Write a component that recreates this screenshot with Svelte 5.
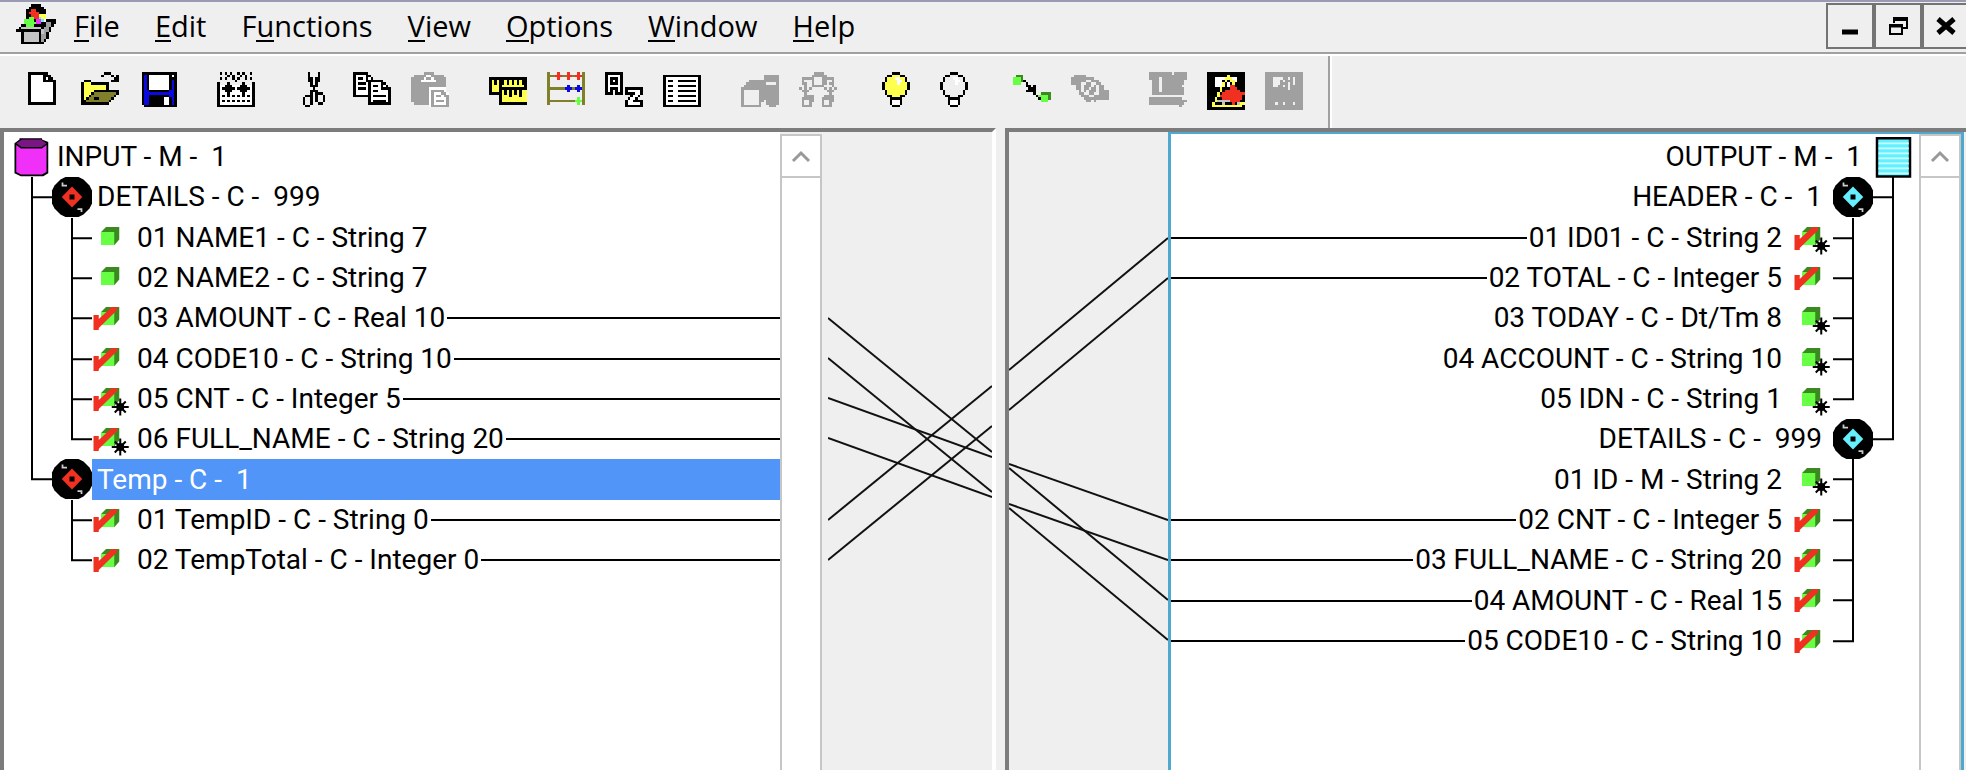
<script>
  const colors = {
    K: '#000000', W: '#ffffff', G: '#a0a0a0', Y: '#ffff4d', O: '#80802a', B: '#0a0ae0',
    R: '#f03020', E: '#66ff44', D: '#3a8a20', L: '#c4c4c4', M: '#f030f8', C: '#66f0ff', A: '#efefef'
  };

  function pixels(rows) {
    const out = [];
    rows.forEach((row, y) => {
      let x = 0;
      while (x < row.length) {
        const c = row[x];
        let end = x + 1;
        while (end < row.length && row[end] === c) end++;
        if (colors[c]) out.push({ x, y, w: end - x, fill: colors[c] });
        x = end;
      }
    });
    return out;
  }

  const bulb = (c) => [
    '......KKK', `....KK${c}${c}${c}KK`, `...K${c}${c}${c}WW${c}${c}K`, `...K${c}${c}${c}${c}WW${c}K`,
    `..K${c}${c}${c}${c}${c}W${c}${c}${c}K`, `..K${c.repeat(9)}K`, `..K${c.repeat(9)}K`,
    `...K${c.repeat(7)}K`, `...K${c.repeat(7)}K`, `....KK${c.repeat(3)}KK`, '.....KKKKK',
    '.....KWWWK', '.....KWWWK', '......KKK'
  ];

  const art = {
    app: [
      '......KKKK', '.....KKKKKK', '....KKRRKKKK', '....KRRRRKKK', '....KKRRRYYY',
      '....KEERRCYY', '...EEEEKMMCWKKKK', '...EEEEEMMKKGGKK', '..KKEEEKKKKKGGK', '.KLLLLLLLLKGGK',
      'KKKKKKKKKKLGGK', '..KLLLLLLKLGK', '..KLLLLLLKGGK', '..KLLLLLLKGGK', '..KLLLLLLKGK', '..KKKKKKKKK'
    ],
    fresh: [
      '..KKKKKKKK', '..KWWWWWKKK', '..KWWWWWKWKK', '..KWWWWWKKKKK', '..KWWWWWWWWWK', '..KWWWWWWWWWK',
      '..KWWWWWWWWWK', '..KWWWWWWWWWK', '..KWWWWWWWWWK', '..KWWWWWWWWWK', '..KWWWWWWWWWK',
      '..KWWWWWWWWWK', '..KKKKKKKKKKK'
    ],
    open: [
      '.........KKK', '........K...K.K', '.............KK', '.KKK........KKK', 'KYYYKKKKKKK',
      'KYYYYYYYYYK', 'KYYYYYYYYYK', 'KYYYYKKKKKKKKKK', 'KYYYKOOOOOOOOOK', 'KYYKOOOOOOOOOK',
      'KYKOOKKOOOOOK', 'KKOOOOOOOOOK', 'KKKKKKKKKKK'
    ],
    save: [
      '.KKKKKKKKKKKKKK', '.KBKWWWWWWWWKWK', '.KBKWWWWWWWWKKK', '.KBKWWWWWWWWKBK', '.KBKWWWWWWWWKBK',
      '.KBKWWWWWWWWKBK', '.KBKWWWWWWWWKBK', '.KBBKKKKKKKKBBK', '.KBBBBBBBBBBBBK', '.KBBKKKKKKKKBBK',
      '.KBBKKKKKKWWKBK', '.KBBKKKKKKWWKBK', '.KBBKKKKKKWWKBK', '..KKKKKKKKKKKKK'
    ],
    compile: [
      '.K.K.K..K.K..K.', '....K.K..K.K...', '.K.K..K.K..K.K.', '.......K.......', 'K...K.....K...K',
      'KWWKKKWWWKKKWWK', 'KWKKKKKWKKKKKWK', 'KWWKKKWWWKKKWWK', 'KWWWKWWWWWKWWWK', 'KWKWKWKWKWKWKWK',
      'KWWWWWWWWWWWWWK', 'KWKWKWKWKWKWKWK', 'KWWWWWWWWWWWWWK', 'KKKKKKKKKKKKKKK'
    ],
    cut: [
      '.....K...K', '.....K...K', '.....KK.KK', '.....KK.KK', '......K.K', '......KKK', '.......K',
      '......KKK', '......K.KKK', '....KKK.K..K', '...K..K.K..K', '...K..K.K..K', '...K..K..KK', '....KK'
    ],
    copy: [
      'KKKKKK', 'KWWWWKK', 'KWKKWKWK', 'KWWWWKKKKKKK', 'KWKKKWKWWWWKK', 'KWWWWWKWKKWKWK', 'KWKKKWKWWWWKKKK',
      'KWWWWWKWKKWWWWK', 'KWWWWWKWWWWWWWK', 'KKKKKKKWKKKKKWK', '......KWWWWWWWK', '......KWKKKKKWK', '......KKKKKKKKK'
    ],
    paste: [
      '.....GGGG', '.GGGGGWWGGGGG', 'GGGGGWGGWGGGGG', 'GGGGWWWWWWGGGG', 'GGGGGGGGGGGGGG', 'GGGGGGGGGGGGGG',
      'GGGGGGGWWWWWWW', 'GGGGGGGWGGGGGW', 'GGGGGGGWGWWWGGW', 'GGGGGGGWGWGGWGG', 'GGGGGGGWGWWWWWG',
      'GGGGGGGWGWGGGWG', '.GGGGGGWGWWWWWG', '.......WGGGGGGG'
    ],
    ruler: [
      '', '', 'KKKKKKKKKKKKKKK', 'KYKYKKYKYKYKYKK', 'KYKYKKYKYKYKYKK', 'KYYYKYYYYYYYYYK', 'KYYYKKKKKKKKKKK',
      'KYYYKYKYKYKYKYY', 'KKKKKYKYKYKYKYY', '....KYYYKYYYKYY', '....KYYYYYYYYYY', '....KYYYYYYYYYY', '....KKKKKKKKKKK'
    ],
    abacus: [
      'O...R...R...R.O', 'OOORRROORRORRRO', 'O...R...R...R.O', 'O.............O', 'O.............O',
      'O.......B...B.O', 'OOOOOOOBBBOBBBO', 'O.......B...B.O', 'O.............O', 'O.............O',
      'O...........E.O', 'OOOOOOOOOOOEEEO', 'O...........E.O'
    ],
    sort: [
      'KKKKKKK', 'KWWWWWK', 'KWKKKWK', 'KWKWKWK', 'KWKKKWK', 'KWWWWWK', 'KWKKKWK.KKKKKKK', 'KWK.KWK.KWWWWWK',
      'KKK.KKK.KKKKWWK', '..........KWWK', '.........KWWK', '........KWWKKKK', '........KWWWWWK', '........KKKKKKK'
    ],
    list: [
      '', 'KKKKKKKKKKKKKKK', 'KWWWWWWWWWWWWWK', 'KWKKWWKKKKKKKWK', 'KWWWWWWWWWWWWWK', 'KWKKWWKKKKKKKWK',
      'KWWWWWWWWWWWWWK', 'KWKKWWKKKKKKKWK', 'KWWWWWWWWWWWWWK', 'KWKKWWKKKKKKKWK', 'KWWWWWWWWWWWWWK',
      'KWKKWWKKKKKKKWK', 'KWWWWWWWWWWWWWK', 'KKKKKKKKKKKKKKK'
    ],
    boxes: [
      '', '.........GGGGGG', '.........GGGGGG', '...GGGGGGGGGGGG', '..GGGGGGGGAAAAG', '.GGGGGGGGGGGGGG', 'GGGGGGGGGGGGGGG',
      'GAAAAAAGGGGGGGG', 'GAAAAAAGGGGGGGG', 'GAAAAAAGGGGGGGG', 'GAAAAAAGGGGGGGG', 'GAAAAAAGG.GGGGG', 'GAAAAAAG..GGGGG', 'GGGGGGGG...GGG'
    ],
    tree: [
      '......GGGG', '.....GGGGGG', '.GGGGGAAAGGGGG', '.G...GAAAGG..G', '.GG..GAAAGG.GG', '..G..GGGGG...G',
      'G.G.G.....G.G.G', '.GGG.......GGG', '..G.........G', '..GGGG....GGGG', '.GGGGG...GGGGG', '.GAAGG...GAAGG', '.GAAG....GAAG', '.GGGG....GGGG'
    ],
    bulbOn: bulb('Y'),
    bulbOff: bulb('A'),
    link: [
      '', '.DDD', 'EEED', 'EEEDK', 'EEE..K', '.....KK.K', '......KKK', '.....KKKK', '........K..DDDD', '.........KEEEED',
      '..........KEEED', '...........EEE'
    ],
    unlink: [
      '', '.GGGGG', 'GGGGGGGGG', 'GGGGGGAAGGG', 'GGGGAAGGAAGG', '..GGAGGGAGAGG', '..GGAGGAGGAGG', '...GAGAGGGAGGGG',
      '...GGAAGGAAGGGG', '....GGGAAGGGGGG', '.....GGGGGGGGGG', '......GG.G'
    ],
    tie: [
      'GGGGGGGGG.GGGGG', 'GGGGGGGGGGGGGGG', 'GGGG.GGGGGGGGGG', '.GGG.GGGGGGGGG', '.GGG.GGGGGGGGG', '.GGG.GGGGGGGG',
      '.GGG.GGGGGGGGG', '.GGG.GGGGGGGGG', '.GGGGGGGGGGGGG', '', 'GGGGGGGGGGGGG', 'GGGGGGGGGGGGGGG', 'GGGGGGGGGGGGGG', '............G'
    ],
    trace: [
      'KKKKKKKKKKKKKKK', 'KKKKKKKKYKKKKKK', 'KKKWWWWYYYWWKKK', 'KKKWWWKYKYYWKKK', 'KKKWWWYKWKYKKKK', 'KKKWWWYKWRRKKKK',
      'KKKKKYKKKRRRKKK', 'KKKKKYKRRRRRRKK', 'KKKKYKRRRRRRRRR', 'KKKKYRRRRRRRRRK', 'KKKYKKRRRRRRRRK', 'KKKYLLLLLRRRRKK',
      'KKYKKKLKKKRKLYY', 'KKYYYYYYYYYYYYK', 'KKKKKKKKKKKKKKK'
    ],
    panel: [
      'GGGGGGGGGGGGGGG', 'GGGGGGGGGGGGGGG', 'GGGAAAAGGAGAGGG', 'GGGAAAGAGGGAGGG', 'GGGAAAGGGAGAGGG', 'GGGAAGGAGAGGGGG',
      'GGGGGGGGGAGGGGG', 'GGGGGGGGGGGGGGG', 'GGGGGGGGGGGGGGG', 'GGGGGGGGGGGGGGG', 'GGGGGGGGGGGGGGG', 'GGGGGGGGGGGGGGG',
      'GGGGAGGAGGGAGGG', 'GGGGGGGGGGGGGGG', 'GGGGGGGGGGGGGGG'
    ]
  };

  const menus = [['', 'F', 'ile'], ['', 'E', 'dit'], ['F', 'u', 'nctions'], ['', 'V', 'iew'], ['', 'O', 'ptions'], ['', 'W', 'indow'], ['', 'H', 'elp']];

  const toolGroups = [
    [['fresh', 'New'], ['open', 'Open'], ['save', 'Save']],
    [['compile', 'Compile']],
    [['cut', 'Cut'], ['copy', 'Copy'], ['paste', 'Paste', true]],
    [['ruler', 'Measure'], ['abacus', 'Counters'], ['sort', 'Sort'], ['list', 'List']],
    [['boxes', 'Group', true], ['tree', 'Hierarchy', true]],
    [['bulbOn', 'Show'], ['bulbOff', 'Hide']],
    [['link', 'Link'], ['unlink', 'Unlink', true]],
    [['tie', 'Text', true], ['trace', 'Trace'], ['panel', 'Panel', true]]
  ];

  const inputRows = [
    { icon: 'drum', text: 'INPUT - M -  1' },
    { guides: ['tee'], icon: 'disc', text: 'DETAILS - C -  999' },
    { guides: ['bar', 'tee'], icon: 'item', text: '01 NAME1 - C - String 7' },
    { guides: ['bar', 'tee'], icon: 'item', text: '02 NAME2 - C - String 7' },
    { guides: ['bar', 'tee'], icon: 'item', tick: true, line: true, text: '03 AMOUNT - C - Real 10' },
    { guides: ['bar', 'tee'], icon: 'item', tick: true, line: true, text: '04 CODE10 - C - String 10' },
    { guides: ['bar', 'tee'], icon: 'item', tick: true, star: true, line: true, text: '05 CNT - C - Integer 5' },
    { guides: ['bar', 'end'], icon: 'item', tick: true, star: true, line: true, text: '06 FULL_NAME - C - String 20' },
    { guides: ['end'], icon: 'disc', selected: true, text: 'Temp - C -  1' },
    { guides: ['none', 'tee'], icon: 'item', tick: true, line: true, text: '01 TempID - C - String 0' },
    { guides: ['none', 'end'], icon: 'item', tick: true, line: true, text: '02 TempTotal - C - Integer 0' }
  ];

  const outputRows = [
    { icon: 'sheet', text: 'OUTPUT - M -  1' },
    { guides: ['tee'], icon: 'disc', text: 'HEADER - C -  1' },
    { guides: ['bar', 'tee'], icon: 'item', tick: true, star: true, line: true, text: '01 ID01 - C - String 2' },
    { guides: ['bar', 'tee'], icon: 'item', tick: true, line: true, text: '02 TOTAL - C - Integer 5' },
    { guides: ['bar', 'tee'], icon: 'item', star: true, text: '03 TODAY - C - Dt/Tm 8' },
    { guides: ['bar', 'tee'], icon: 'item', star: true, text: '04 ACCOUNT - C - String 10' },
    { guides: ['bar', 'end'], icon: 'item', star: true, text: '05 IDN - C - String 1' },
    { guides: ['end'], icon: 'disc', text: 'DETAILS - C -  999' },
    { guides: ['none', 'tee'], icon: 'item', star: true, text: '01 ID - M - String 2' },
    { guides: ['none', 'tee'], icon: 'item', tick: true, line: true, text: '02 CNT - C - Integer 5' },
    { guides: ['none', 'tee'], icon: 'item', tick: true, line: true, text: '03 FULL_NAME - C - String 20' },
    { guides: ['none', 'tee'], icon: 'item', tick: true, line: true, text: '04 AMOUNT - C - Real 15' },
    { guides: ['none', 'end'], icon: 'item', tick: true, line: true, text: '05 CODE10 - C - String 10' }
  ];

  const guidePaths = { bar: 'M20 0V41', tee: 'M20 0V41M20 20H40', end: 'M20 0V21M20 20H40', none: '' };

  /* start and end heights of each mapping line, measured from the first row */
  const leftLinks = [[182, 316], [222, 356], [262, 321], [302, 361], [384, 250], [424, 290]];
  const rightLinks = [[234, 102], [274, 142], [328, 384], [368, 424], [332, 464], [372, 504]];
</script>

{#snippet sprite(name, size)}
  <svg class="sprite" viewBox="0 0 {size} {size}" aria-hidden="true">
    {#each pixels(art[name]) as p}
      <rect x={p.x} y={p.y} width={p.w} height="1" fill={p.fill} />
    {/each}
  </svg>
{/snippet}

{#snippet nodeIcon(row, mirrored)}
  <svg class="cell" viewBox="0 0 16 16" aria-hidden="true">
    {#if row.icon === 'drum'}
      <path d="M1 2.5 3 1V.5H12V1L14.5 2V14.5L12.5 15.7H3.5L1 14.5Z" fill="#000" />
      <path d="M1.7 3.2 3.5 4.6H12L13.8 3.2V14L12 15H3.6L1.7 14Z" fill="#f030f8" />
      <path d="M1.7 2.5 4 1H11.5L13.8 2.5 11.8 4H3.8Z" fill="#7a1684" />
    {:else if row.icon === 'sheet'}
      <rect x="1.6" y=".5" width="13.2" height="15.3" fill="#66f0ff" stroke="#000" />
      <path d="M2.2 2.5H14.3M2.2 4.5H14.3M2.2 6.5H14.3M2.2 8.5H14.3M2.2 10.5H14.3M2.2 12.5H14.3M2.2 14.5H14.3" stroke="#c8ffff" stroke-width=".7" />
    {:else if row.icon === 'disc'}
      <path d="M5.4 0H10.6L12.6 1 15 3.4 16 5.4V10.6L15 12.6 12.6 15 10.6 16H5.4L3.4 15 1 12.6 0 10.6V5.4L1 3.4 3.4 1Z" fill="#000" />
      <path d="M8 3.8 12.1 8 8 12.2 3.9 8Z" fill={mirrored ? '#66f0ff' : '#f03020'} />
      <rect x="7" y="7" width="2" height="2" fill="#000" />
      <path d="M4.2 2.2V3.4H6M10.2 12.8H11.8V14" fill="none" stroke="#ccc" stroke-width=".7" />
    {:else}
      <path d="M3.6 5.6 5.6 3.6H10.9V8.6L9 10.8H8.8V5.6Z" fill="#3a8a20" />
      <rect x="3.6" y="5.6" width="5.3" height="5.2" fill="#66ff44" />
      {#if row.tick}
        <path d="M.6 6.8H2.7V8.4L7.8 3.7H10.1V4.8L2.7 12V12.8H.6Z" fill="#f03020" />
      {/if}
      {#if row.star}
        <path d="M11.3 7.8V14.6M7.9 11.2H14.7M9.1 9 13.5 13.4M13.5 9 9.1 13.4" stroke="#000" stroke-width=".8" />
        <circle cx="11.3" cy="11.2" r="1.6" fill="#000" />
      {/if}
    {/if}
  </svg>
{/snippet}

{#snippet tree(rows, mirrored, label)}
  <ul class="tree" class:mirrored aria-label={label}>
    {#each rows as row}
      <li class="row">
        {#each row.guides ?? [] as g}
          <svg class="guide" viewBox="0 0 40 40" preserveAspectRatio="none" aria-hidden="true"><path d={guidePaths[g]} /></svg>
        {/each}
        {@render nodeIcon(row, mirrored)}
        <div class="label" class:selected={row.selected}>
          <span>{row.text}</span>
          {#if row.line}<i class="line"></i>{/if}
        </div>
      </li>
    {/each}
  </ul>
{/snippet}

{#snippet scrollbar()}
  <div class="scrollbar">
    <button class="up" aria-label="Scroll up">
      <svg viewBox="0 0 20 14" aria-hidden="true"><path d="M2 12 10 4 18 12" /></svg>
    </button>
  </div>
{/snippet}

<div class="window">
  <header class="menubar">
    <span class="logo">{@render sprite('app', 16)}</span>
    <nav>
      {#each menus as [before, key, after]}
        <button class="menu">{before}<span class="key">{key}</span>{after}</button>
      {/each}
    </nav>
    <div class="controls">
      <button aria-label="Minimize"><svg viewBox="0 0 20 20"><path d="M2 16H18" stroke-width="5" /></svg></button>
      <button aria-label="Restore">
        <svg viewBox="0 0 20 20"><path d="M6 7V2H19V12H15M6 2H19" stroke-width="2" /><path d="M5 3H20" stroke-width="4" /><path d="M2 9H14V18H2Z" stroke-width="2" /><path d="M1 10H15" stroke-width="3" /></svg>
      </button>
      <button aria-label="Close"><svg viewBox="0 0 20 20"><path d="M2 3 18 17M18 3 2 17" stroke-width="5" /></svg></button>
    </div>
  </header>

  <div class="toolbar">
    <div class="tools">
      {#each toolGroups as group}
        <div class="group">
          {#each group as [name, label, off]}
            <button class="tool" aria-label={label} disabled={off}>{@render sprite(name, 15)}</button>
          {/each}
        </div>
      {/each}
    </div>
  </div>

  <main>
    <section class="pane input">
      <div class="list">{@render tree(inputRows, false, 'Input')}</div>
      {@render scrollbar()}
      <svg class="links" viewBox="0 0 163 524" preserveAspectRatio="none" aria-hidden="true">
        {#each leftLinks as [a, b]}<path d="M0 {a}L163 {b}" />{/each}
      </svg>
    </section>
    <section class="pane output">
      <svg class="links" viewBox="0 0 159 524" preserveAspectRatio="none" aria-hidden="true">
        {#each rightLinks as [a, b]}<path d="M0 {a}L159 {b}" />{/each}
      </svg>
      <div class="focus">
        <div class="list">{@render tree(outputRows, true, 'Output')}</div>
        {@render scrollbar()}
      </div>
    </section>
  </main>
</div>

<style>
  :global(body) { margin: 0; }
  .window {
    display: flex;
    flex-direction: column;
    height: 100vh;
    overflow: hidden;
    background: #efefef;
    color: #000;
    box-sizing: border-box;
    border-top: 2px solid #9a9ab2;
  }
  button {
    appearance: none;
    margin: 0;
    padding: 0;
    border: 0;
    background: none;
    color: inherit;
    font: inherit;
  }
  svg { display: block; }
  .sprite { width: 38px; height: 38px; shape-rendering: crispEdges; }

  .menubar {
    display: flex;
    align-items: flex-start;
    height: 50px;
    padding-left: 16px;
    border-bottom: 2px solid #a0a0a0;
    font: 29px/32px "Open Sans", "Noto Sans", sans-serif;
  }
  .logo { padding-top: 2px; }
  .logo .sprite { width: 40px; height: 40px; }
  nav { display: flex; gap: 35px; padding: 8px 0 0 18px; }
  .key { display: inline-block; height: 30px; border-bottom: 2px solid #000; }
  .controls { display: flex; margin: 1px -4px 0 auto; }
  .controls button {
    display: grid;
    place-items: center;
    box-sizing: border-box;
    width: 48px;
    height: 46px;
    border: 2px solid #747474;
  }
  .controls svg { width: 20px; height: 20px; fill: none; stroke: #000; }

  .toolbar { height: 74px; border-top: 2px solid #fff; box-sizing: border-box; display: flex; }
  .tools {
    display: flex;
    gap: 20px;
    padding: 16px 15px 0 13px;
    border-right: 2px solid #a0a0a0;
    box-shadow: 2px 0 #fff;
  }
  .group { display: flex; }
  .tool { display: flex; justify-content: center; align-items: flex-start; width: 58px; }

  main { flex: 1; display: grid; grid-template-columns: 1005fr 961fr; min-height: 0; }
  .pane { display: flex; min-width: 0; box-sizing: border-box; border-top: 4px solid #7c7c7c; border-left: 4px solid #7c7c7c; }
  .input { margin-right: 9px; border-right: 4px solid #fff; }
  .focus { flex: 1; display: flex; min-width: 0; border: 2px solid #4fa8d0; border-width: 2px 3px 0 3px; margin-right: 2px; background: #fff; }
  .list { flex: 1; min-width: 0; background: #fff; }
  .input .list { padding-top: 2px; }
  .tree {
    display: grid;
    grid-template-rows: repeat(13, 1fr);
    height: 524px;
    margin: 0;
    padding: 3px 0 0 8px;
    list-style: none;
    font: 28px/36px Roboto, sans-serif;
    white-space: pre;
  }
  .mirrored { padding: 3px 6px 0 0; }
  .row { display: flex; min-height: 0; }
  .mirrored .row { flex-direction: row; direction: rtl; }
  .guide { flex: none; width: 40px; height: 100%; overflow: visible; fill: none; stroke: #000; stroke-width: 2; }
  .mirrored .guide { transform: scaleX(-1); }
  .cell { flex: none; width: 40px; height: 40px; overflow: visible; }
  .label { flex: 1; display: flex; align-items: center; gap: 2px; padding-left: 5px; }
  .mirrored .label { padding: 0 11px 0 0; }
  .label span { direction: ltr; }
  .selected { background: #5095f7; color: #fff; }
  .line { flex: 1; height: 2px; background: #000; }

  .scrollbar { width: 42px; box-sizing: border-box; border: solid #c6c6c6; border-width: 2px 2px 0; background: #fff; }
  .input .scrollbar { margin-top: 2px; }
  .up { display: grid; place-items: center; width: 100%; height: 42px; box-sizing: border-box; border-bottom: 2px solid #c6c6c6; }
  .up svg { width: 20px; height: 14px; fill: none; stroke: #999; stroke-width: 3; }
  .links { flex: none; height: 524px; padding-top: 4px; fill: none; stroke: #111; stroke-width: 2; }
  .input .links { width: 164px; padding-left: 6px; }
  .output .links { width: 159px; }
</style>
